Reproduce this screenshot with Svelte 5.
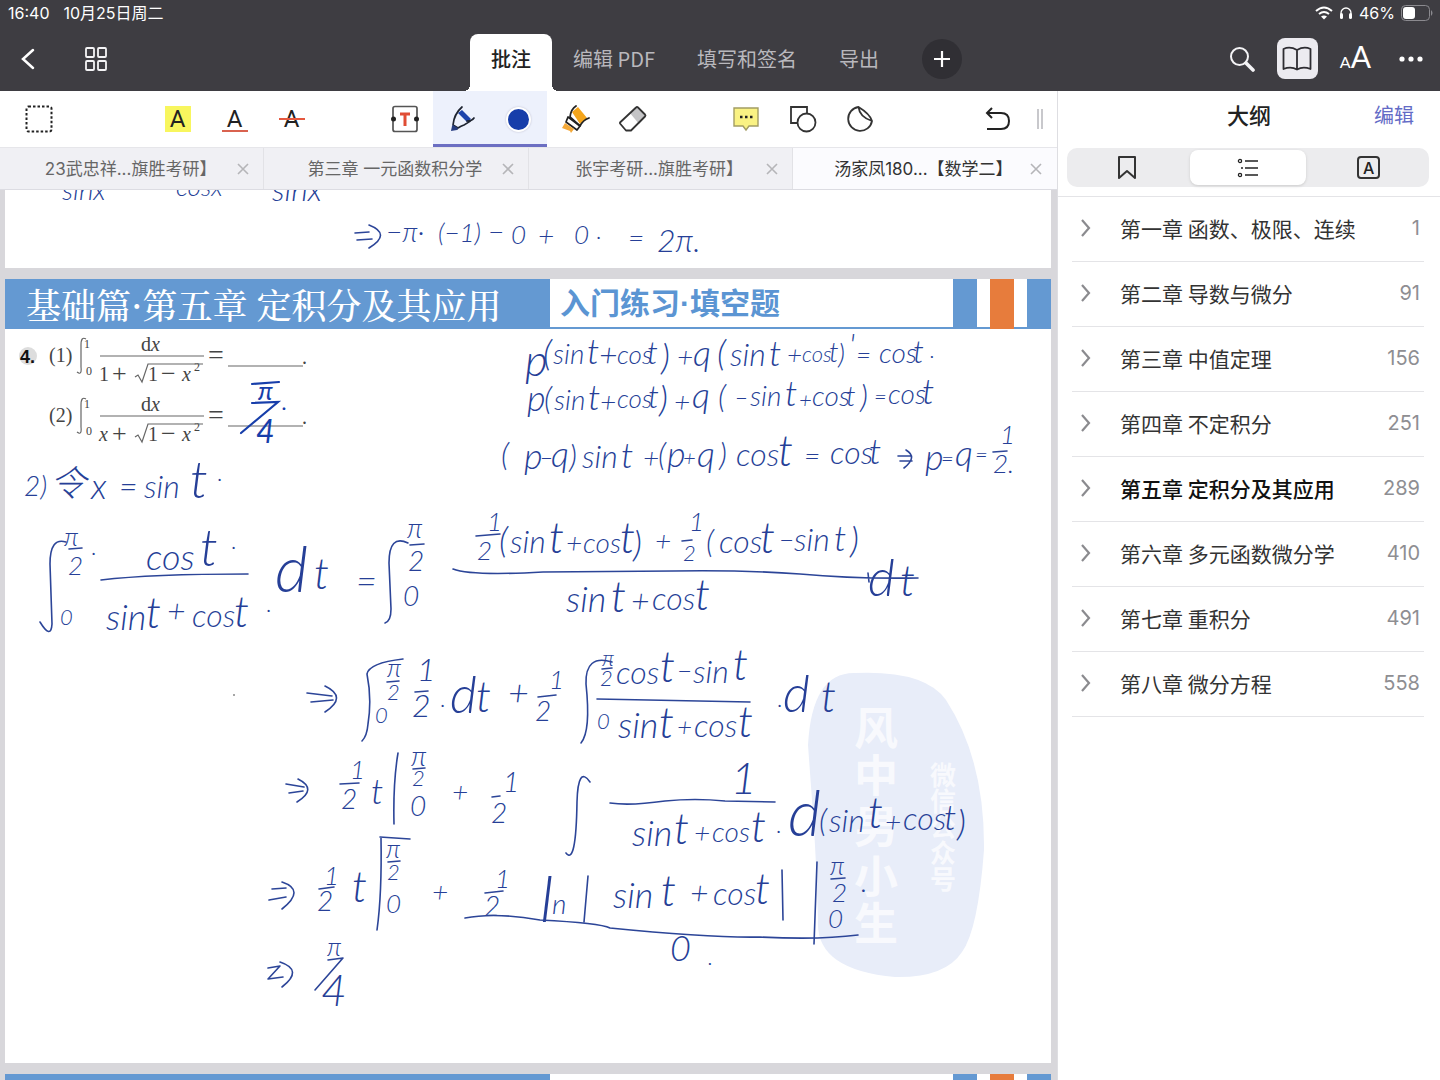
<script lang="ts">
  type Ink = [number, number, number, string];

  const modes = ['批注', '编辑 PDF', '填写和签名', '导出'];
  let mode = $state('批注');

  const tabs = ['23武忠祥...旗胜考研】', '第三章 一元函数积分学', '张宇考研...旗胜考研】', '汤家凤180...【数学二】'];
  let openTab = $state(3);

  const outline = [
    { title: '第一章 函数、极限、连续', page: 1 },
    { title: '第二章 导数与微分', page: 91 },
    { title: '第三章 中值定理', page: 156 },
    { title: '第四章 不定积分', page: 251 },
    { title: '第五章 定积分及其应用', page: 289 },
    { title: '第六章 多元函数微分学', page: 410 },
    { title: '第七章 重积分', page: 491 },
    { title: '第八章 微分方程', page: 558 },
  ];
  const currentPage = 289;

  // Handwritten notes: x, baseline, size, text
  const notesAbove: Ink[] = [
    [62, 200, 28, 'sinx'], [176, 196, 26, 'cosx'], [272, 201, 32, 'sinx'],
    [386, 242, 28, '−π·'], [438, 242, 26, '(−1)'], [488, 242, 28, '−'], [511, 244, 26, '0'],
    [538, 246, 28, '+'], [574, 244, 26, '0'], [596, 244, 22, '·'], [628, 248, 28, '='], [657, 252, 32, '2π.'],
  ];

  const notes: Ink[] = [
    [525, 376, 44, 'p'], [543, 366, 36, '('], [553, 364, 28, 'sin'], [587, 364, 36, 't'], [599, 366, 32, '+'], [617, 364, 26, 'cos'], [647, 364, 32, 't'], [661, 370, 36, ')'],
    [677, 367, 28, '+'], [693, 366, 36, 'q'], [717, 366, 36, '('], [730, 366, 32, 'sin'], [769, 366, 36, 't'], [787, 364, 26, '+'], [802, 362, 22, 'cos'], [829, 362, 28, 't'], [838, 364, 28, ')'],
    [849, 356, 32, "'"], [856, 364, 26, '='], [879, 363, 28, 'cos'], [913, 363, 32, 't'], [930, 358, 22, '.'],
    [527, 411, 36, 'p'], [544, 410, 32, '('], [554, 410, 28, 'sin'], [588, 410, 36, 't'], [600, 412, 28, '+'], [617, 408, 26, 'cos'], [648, 408, 32, 't'], [659, 412, 36, ')'],
    [674, 412, 28, '+'], [692, 408, 36, 'q'], [718, 408, 32, '('], [735, 406, 22, '−'], [750, 406, 28, 'sin'], [785, 406, 36, 't'], [799, 408, 22, '+'], [812, 406, 28, 'cos'], [846, 406, 28, 't'],
    [860, 408, 32, ')'], [874, 404, 22, '='], [888, 404, 28, 'cos'], [922, 404, 36, 't'],
    [501, 466, 32, '('], [524, 469, 36, 'p'], [540, 466, 22, '−'], [551, 467, 36, 'q'], [569, 468, 32, ')'], [582, 468, 32, 'sin'], [621, 468, 36, 't'],
    [643, 468, 28, '+'], [658, 466, 32, '('], [667, 467, 36, 'p'], [683, 466, 22, '+'], [697, 467, 36, 'q'], [719, 466, 32, ')'],
    [736, 466, 32, 'cos'], [778, 466, 44, 't'], [804, 466, 28, '='], [830, 464, 32, 'cos'], [869, 464, 36, 't'], [925, 470, 36, 'p'], [941, 466, 22, '='], [955, 466, 36, 'q'],
    [975, 462, 22, '='], [1000, 444, 26, '1'], [993, 473, 26, '2.'],

    [24, 496, 28, '2)'], [50, 496, 36, '令'], [91, 499, 36, 'x'], [119, 498, 32, '='], [144, 498, 32, 'sin'], [190, 498, 52, 't'], [217, 486, 22, '·'],

    [64, 546, 26, 'π'], [68, 575, 26, '2'], [91, 560, 22, '·'], [60, 625, 22, '0'], [146, 570, 36, 'cos'], [200, 566, 52, 't'], [231, 554, 22, '·'],
    [106, 630, 36, 'sin'], [146, 628, 44, 't'], [167, 622, 32, '+'], [192, 627, 32, 'cos'], [234, 627, 44, 't'], [266, 617, 22, '·'],
    [275, 592, 64, 'd'], [314, 589, 44, 't'], [356, 594, 36, '='],
    [407, 538, 28, 'π'], [408, 571, 28, '2'], [403, 606, 28, '0'],
    [487, 531, 26, '1'], [477, 560, 26, '2'], [499, 553, 36, '('], [510, 553, 32, 'sin'], [549, 553, 44, 't'], [566, 553, 28, '+'], [583, 553, 28, 'cos'], [620, 553, 44, 't'], [633, 557, 36, ')'],
    [655, 551, 28, '+'], [689, 531, 26, '1'], [683, 561, 22, '2'], [706, 553, 32, '('], [719, 553, 32, 'cos'], [760, 553, 44, 't'], [779, 549, 26, '−'], [794, 551, 32, 'sin'], [834, 551, 36, 't'], [850, 553, 36, ')'],
    [566, 612, 36, 'sin'], [611, 612, 44, 't'], [631, 612, 32, '+'], [652, 610, 32, 'cos'], [695, 610, 44, 't'], [868, 596, 52, 'd'], [900, 596, 44, 't'],

    [387, 677, 26, 'π'], [387, 700, 22, '2'], [375, 723, 22, '0'], [417, 681, 32, '1'], [412, 717, 32, '2'], [440, 712, 22, '·'], [450, 713, 52, 'd'], [476, 712, 44, 't'],
    [508, 706, 36, '+'], [549, 689, 26, '1'], [535, 721, 28, '2'],
    [602, 666, 22, 'π'], [600, 686, 22, '2'], [597, 729, 22, '0'], [616, 684, 32, 'cos'], [660, 682, 44, 't'], [677, 680, 26, '−'], [693, 683, 32, 'sin'], [733, 680, 44, 't'],
    [618, 738, 36, 'sin'], [659, 738, 44, 't'], [677, 736, 26, '+'], [694, 737, 32, 'cos'], [738, 737, 44, 't'], [777, 712, 22, '·'], [783, 712, 52, 'd'], [821, 712, 44, 't'],

    [350, 779, 26, '1'], [341, 809, 28, '2'], [371, 804, 36, 't'], [411, 766, 28, 'π'], [412, 786, 22, '2'], [410, 816, 28, '0'], [452, 802, 28, '+'],
    [503, 792, 28, '1'], [491, 823, 28, '2'], [731, 794, 44, '1'],
    [632, 846, 36, 'sin'], [674, 844, 44, 't'], [694, 843, 28, '+'], [712, 842, 28, 'cos'], [751, 842, 44, 't'], [776, 838, 22, '·'], [788, 836, 64, 'd'], [819, 832, 32, '('], [829, 832, 32, 'sin'], [868, 828, 44, 't'],
    [885, 832, 28, '+'], [903, 830, 32, 'cos'], [944, 830, 36, 't'], [957, 836, 36, ')'],

    [324, 885, 26, '1'], [317, 911, 28, '2'], [352, 902, 44, 't'], [386, 858, 26, 'π'], [387, 880, 22, '2'], [386, 913, 26, '0'], [432, 902, 28, '+'],
    [495, 888, 26, '1'], [484, 916, 28, '2'], [540, 922, 64, 'l'], [552, 914, 28, 'n'],
    [613, 908, 36, 'sin'], [661, 906, 44, 't'], [690, 904, 32, '+'], [713, 905, 32, 'cos'], [755, 904, 44, 't'],
    [830, 875, 26, 'π'], [832, 902, 26, '2'], [861, 892, 28, '.'], [828, 928, 26, '0'], [670, 961, 36, '0'], [708, 965, 22, '.'],
    [327, 956, 26, 'π'], [321, 1006, 44, '4'],
  ];

  // Fraction bars, integral signs, limits bars and arrows
  const strokes = [
    'M66 542q-16-5-16 22l2 60q-1 16-12-2', 'M69 549l13-1', 'M101 580q50-6 147-6',
    'M408 543q-19-9-19 20l2 46q0 12-6 14', 'M410 545l14-1',
    'M476 536l24-2M682 541l10-1', 'M453 569q18 7 90 3l130-1q75-1 127 3 54 5 118 4M868 573l1 9',
    'M403 659q-34 4-36 15 5 25 1 50-1 12-6 17M387 682l12-1M415 692l13-1M538 697l18-2',
    'M612 662q-27-8-26 22 5 47-5 59M602 669l10-1M597 699l153 3',
    'M340 784l19-1M398 753q-5 30-4 71M492 797l8-1M413 769l12-1',
    'M590 782q-12-17-13 20-1 64-11 51M610 803q20 3 55-2 30-3 60 0l50 1',
    'M319 889l15-2M381 838q1 56-4 92M380 837l30 2M388 862l12-1M485 893l18-2',
    'M588 876l-4 46M782 870l1 50M817 862l-3 82M831 879l14-1',
    'M465 918q30-6 75 2 60 3 70 8 100 10 150 9 60 3 98-2',
    'M993 452l14-1',
  ];
  const arrows = [
    'M898 456h13M900 461h12M906 450q12 7-2 18',
    'M307 693l25 3M311 702l22-2M325 686q23 11 0 26',
    'M286 784l18 3M289 793l14-2M298 779q20 10-1 23',
    'M272 889l14-1M269 900l17-3M282 882q24 8 0 27',
    'M268 968l12-2-12 13 15-2M280 962q24 8 2 25',
  ];
</script>

<svelte:head><title>汤家凤180 数学二</title></svelte:head>

<div class="app">
  <header>
    <div class="status">
      <span class="time">16:40</span><span>10月25日周二</span>
      <span class="system">
        <svg width="18" height="14" viewBox="0 0 18 14" aria-hidden="true" fill="none" stroke="#fff" stroke-width="2"><path d="M1 5q8-7 16 0M4 8q5-4 10 0"/><path d="M9 13.500l-3-3q3-2 6 0z" fill="#fff" stroke="none"/></svg>
        <svg width="14" height="14" viewBox="0 0 14 14" aria-hidden="true"><path d="M2 9V7a5 5 0 0 1 10 0v2" fill="none" stroke="#fff" stroke-width="1.300"/><rect x="1" y="7" width="3" height="6" rx="1.500" fill="#fff"/><rect x="10" y="7" width="3" height="6" rx="1.500" fill="#fff"/></svg>
        <span>46%</span>
        <svg width="33" height="16" viewBox="0 0 33 16" aria-hidden="true"><rect x=".5" y=".5" width="28" height="15" rx="4" fill="none" stroke="#8b8a8f"/><rect x="2" y="2" width="12" height="12" rx="3" fill="#fff"/><path d="M30 5q3 3 0 6z" fill="#8b8a8f"/></svg>
      </span>
    </div>
    <div class="nav">
      <div class="nav-left">
        <button aria-label="返回"><svg width="24" height="24" viewBox="0 0 24 24"><path d="M17 3L7 12l10 9" fill="none" stroke="#fff" stroke-width="2.500" stroke-linecap="round"/></svg></button>
        <button aria-label="缩略图"><svg width="24" height="24" viewBox="0 0 24 24" fill="none" stroke="#f4f4f6" stroke-width="1.800"><rect x="2" y="1" width="8" height="9" rx="1"/><rect x="14" y="1" width="8" height="9" rx="1"/><rect x="2" y="14" width="8" height="9" rx="1"/><rect x="14" y="14" width="8" height="9" rx="1"/></svg></button>
      </div>
      <nav>
        {#each modes as item}
          <button class="mode" class:active={mode === item} onclick={() => (mode = item)}>{item}</button>
        {/each}
        <button class="add" aria-label="添加"><svg width="16" height="16" viewBox="0 0 16 16"><path d="M8 0v16M0 8h16" stroke="#fff" stroke-width="2.200"/></svg></button>
      </nav>
      <div class="nav-right">
        <button aria-label="搜索"><svg width="26" height="26" viewBox="0 0 26 26" fill="none" stroke="#f4f4f6"><circle cx="10.500" cy="10.500" r="8.500" stroke-width="2"/><path d="M17 17l7 7" stroke-width="3.600" stroke-linecap="round"/></svg></button>
        <button class="book" aria-label="大纲"><svg width="30" height="26" viewBox="0 0 30 26" fill="none" stroke="#2e2d32" stroke-width="1.800" stroke-linejoin="round"><path d="M15 4Q8 0 1.500 3v20Q9 20 15 23.500 21 20 28.500 23V3Q22 0 15 4zV23"/></svg></button>
        <button class="font" aria-label="字体"><span>A</span>A</button>
        <button aria-label="更多"><svg width="24" height="6" viewBox="0 0 24 6" fill="#fff"><circle cx="3" cy="3" r="2.600"/><circle cx="12" cy="3" r="2.600"/><circle cx="21" cy="3" r="2.600"/></svg></button>
      </div>
    </div>
  </header>

  <div class="body">
    <main>
      <div class="tools">
        <div class="group">
          <button aria-label="选择"><svg width="28" height="28" viewBox="0 0 28 28"><rect x="1.500" y="1.500" width="25" height="25" rx="2" fill="none" stroke="#222" stroke-width="2" stroke-dasharray="2.500 2"/></svg></button>
        </div>
        <div class="group marks">
          <button aria-label="高亮"><span class="mark hl">A</span></button>
          <button aria-label="下划线"><span class="mark ul">A</span></button>
          <button aria-label="删除线"><span class="mark st">A</span></button>
        </div>
        <div class="group">
          <button aria-label="文本"><svg width="28" height="28" viewBox="0 0 28 28"><rect x="2" y="1.500" width="24" height="25" rx="2" fill="#fff" stroke="#555" stroke-width="1.700"/><circle cx="2.500" cy="14" r="2.500" fill="#222"/><circle cx="25.500" cy="14" r="2.500" fill="#222"/><path d="M9 9h10M14 9v12" stroke="#e04d35" stroke-width="3"/></svg></button>
          <div class="pen">
            <button aria-label="画笔"><svg width="28" height="28" viewBox="0 0 28 28" fill="none" stroke="#1e2430" stroke-width="1.700" stroke-linecap="round" stroke-linejoin="round"><path d="M10 8l4-3 9 9-4 3z" fill="#1c43ab" stroke="none"/><path d="M14 2Q6 9 5 20l5 3q3-2 6-3 6-3 10-7-2 3-7 3M5 20l4 4"/><path d="M5 20l5 3-1 2-6 1 1-5z" fill="#273d80" stroke="none"/></svg></button>
            <button aria-label="颜色"><span class="dot"></span></button>
          </div>
          <button aria-label="荧光笔"><svg width="28" height="28" viewBox="0 0 28 28" stroke-linejoin="round"><path d="M10 7l6-5 9 11-7 6z" fill="#f4a51c"/><path d="M6 12l12 9-3 4-11-8z" fill="#fff" stroke="#222" stroke-width="1.700"/><path d="M14 1Q9 4 8 12l10 9q3-6 9-8" fill="none" stroke="#222" stroke-width="1.800" stroke-linecap="round"/><path d="M3 18l9 6-3 4-1-2-8-3z" fill="#f4a939"/></svg></button>
          <button aria-label="橡皮擦"><svg width="30" height="28" viewBox="0 0 30 28" stroke-linejoin="round"><path d="M12 8l6-6 10 9-7 8z" fill="#c4c4c6"/><path d="M18 2.500q1-1 2 0l7 7q1 1 0 2L13 25.500H8l-6-7v-1z" fill="none" stroke="#333" stroke-width="1.800"/></svg></button>
        </div>
        <div class="group">
          <button aria-label="注释"><svg width="28" height="26" viewBox="0 0 28 26"><path d="M2 2h24v18H17l-3 4-3-4H2z" fill="#faf283" stroke="#a39d63" stroke-width="1.400"/><path d="M8 11h2.500M13 11h2.500M18 11h2.500" stroke="#222" stroke-width="2.500"/></svg></button>
          <button aria-label="形状"><svg width="28" height="28" viewBox="0 0 28 28" fill="none" stroke="#333" stroke-width="1.800"><path d="M9 18H2V2h16v7"/><circle cx="17.500" cy="17.500" r="9"/></svg></button>
          <button aria-label="贴纸"><svg width="28" height="28" viewBox="0 0 28 28" fill="none" stroke="#333" stroke-width="1.800" stroke-linejoin="round"><path d="M12.500 2A12 12 0 1 0 26 16Q24 9 12.500 2zM12.500 2q1 10 13.500 14"/></svg></button>
        </div>
        <div class="group end">
          <button aria-label="撤销"><svg width="26" height="24" viewBox="0 0 26 24" fill="none" stroke="#222" stroke-width="2"><path d="M7 1L2 6l5 5M2 6h14q8 0 8 8t-8 8H2"/></svg></button>
          <span class="grip"></span>
        </div>
      </div>

      <div class="tabs">
        {#each tabs as tab, i}
          <div class="tab" class:open={openTab === i}>
            <button class="name" onclick={() => (openTab = i)}>{tab}</button>
            <button class="close" aria-label="关闭"><svg width="12" height="12" viewBox="0 0 12 12"><path d="M1 1l10 10M11 1L1 11" stroke="#b5b5b8" stroke-width="1.600"/></svg></button>
          </div>
        {/each}
      </div>

      <div class="doc">
        <section class="page">
          <svg class="ink" viewBox="5 190 1046 78">
            {#each notesAbove as [x, y, size, text]}
              <text {x} {y} font-size={size}>{text}</text>
            {/each}
            <g class="stroke"><path d="M355 233l14-1M357 240l15-1M369 225q23 9 0 23M462 189h4"/></g>
          </svg>
        </section>

        <section class="page">
          <div class="band">
            <h1>基础篇·第五章 定积分及其应用</h1>
            <div class="sub"><h2>入门练习·填空题</h2><i></i><i class="orange"></i><i></i></div>
          </div>
          <svg class="ink" viewBox="5 329 1046 734">
            <path d="M808 745Q812 672 855 673 925 670 946 700 985 760 984 850 978 930 962 952 945 978 895 977 815 970 818 920 816 850 812 800z" fill="#e8edf9"/>
            <g class="seal">
              <text x="854" y="745" font-size="44">风</text><text x="854" y="792" font-size="44">中</text><text x="854" y="843" font-size="44">男</text><text x="854" y="893" font-size="44">小</text><text x="854" y="940" font-size="44">生</text>
              <text x="930" y="785" font-size="26">微</text><text x="930" y="811" font-size="26">信</text><text x="930" y="837" font-size="26">公</text><text x="930" y="863" font-size="26">众</text><text x="930" y="889" font-size="26">号</text>
            </g>

            <circle cx="28" cy="356" r="9" fill="#ddd"/>
            <text class="num" x="20" y="363" font-size="18">4.</text>
            {#each [0, 60] as dy}
              <g class="print" transform="translate(0 {dy})">
                <text x="49" y="362" font-size="20">{dy ? '(2)' : '(1)'}</text>
                <text x="84" y="348" font-size="12">1</text><text x="86" y="375" font-size="12">0</text>
                <text x="141" y="351" font-size="20">d<tspan class="var">x</tspan></text>
                <text x="99" y="381" font-size="20">{#if dy}<tspan class="var">x</tspan>{:else}1{/if}</text>
                <text x="112" y="382" font-size="26">+</text>
                <text x="148" y="381" font-size="20">1</text><text x="161" y="382" font-size="26">−</text><text class="var" x="182" y="381" font-size="20">x</text><text x="194" y="371" font-size="12">2</text>
                <text x="208" y="364" font-size="28">=</text>
                <text x="302" y="364" font-size="20">.</text>
                <path d="M86 339q-5-3-5 6v22q1 9-4 5M100 356h104M135 377l3-2 4 7 6-18h55M228 366h75"/>
              </g>
            {/each}

            {#each notes as [x, y, size, text]}
              <text {x} {y} font-size={size}>{text}</text>
            {/each}
            <g class="stroke">
              {#each strokes as d}<path {d}/>{/each}
              {#each arrows as d}<path {d}/>{/each}
              <path d="M328 960l15-2-28 32"/>
            </g>
            <g class="thick">
              <text x="258" y="400" font-size="26">π</text><text x="256" y="443" font-size="32">4</text><text x="282" y="410" font-size="22">.</text>
              <path d="M252 403l26-1-37 31M252 384l27-2"/>
            </g>
            <circle cx="234" cy="695" r="1" fill="#888"/>
          </svg>
        </section>

        <section class="page">
          <div class="band"><span class="fill"></span><div class="sub"><i></i><i class="orange"></i><i></i></div></div>
        </section>
      </div>
    </main>

    <aside>
      <div class="side-head"><span></span><h2>大纲</h2><button>编辑</button></div>
      <div class="segments">
        <button aria-label="书签"><svg width="20" height="26" viewBox="0 0 20 26" fill="none" stroke="#333" stroke-width="2" stroke-linejoin="round"><path d="M2 2h16v21l-8-7-8 7z"/></svg></button>
        <button class="chosen" aria-label="大纲列表"><svg width="22" height="20" viewBox="0 0 22 20" fill="none" stroke="#222" stroke-width="1.700"><path d="M8 3h13M8 10h13M8 17h13M4 10h2"/><circle cx="3" cy="3" r="1.600" stroke-width="1.300"/><circle cx="3" cy="17" r="1.600" stroke-width="1.300"/></svg></button>
        <button aria-label="批注列表"><span class="boxed">A</span></button>
      </div>
      <ul>
        {#each outline as item}
          <li>
            <button class:current={item.page === currentPage}>
              <svg width="10" height="18" viewBox="0 0 10 18"><path d="M1 1l7 8-7 8" fill="none" stroke="#8b8b8f" stroke-width="2.200"/></svg>
              <span class="title">{item.title}</span><span class="page-no">{item.page}</span>
            </button>
          </li>
        {/each}
      </ul>
    </aside>
  </div>
</div>

<style>
  :global(body) { margin: 0; }
  .app { height: 100vh; display: flex; flex-direction: column; overflow: hidden; background: #fff; color: #222; font-family: Inter, "Noto Sans CJK SC", sans-serif; }
  button { border: 0; padding: 0; margin: 0; background: none; font: inherit; color: inherit; cursor: pointer; display: flex; align-items: center; justify-content: center; }
  h1, h2, ul { margin: 0; padding: 0; }
  svg { display: block; flex: none; }

  header { background: #3e3d42; color: #fff; }
  .status { height: 26px; padding: 0 6px 0 8px; display: flex; align-items: center; gap: 14px; font-size: 16px; line-height: 26px; }
  .system { margin-left: auto; display: flex; align-items: center; gap: 6px; }
  .nav { height: 65px; display: grid; grid-template-columns: 1fr auto 1fr; align-items: end; }
  .nav-left, .nav-right { height: 65px; display: flex; align-items: center; }
  .nav-left { padding-left: 16px; gap: 44px; }
  .nav-right { justify-content: flex-end; padding-right: 17px; gap: 22px; }
  nav { display: flex; align-items: flex-end; padding-right: 8px; }
  .mode { height: 57px; padding: 0 21px 8px; font-size: 20px; line-height: 28px; color: #b9b8bd; font-family: "Noto Sans CJK SC", sans-serif; position: relative; }
  .mode.active { background: #fff; color: #222; font-weight: 500; border-radius: 8px 8px 0 0; }
  .mode.active::before, .mode.active::after { content: ""; position: absolute; bottom: 0; width: 6px; height: 6px; }
  .mode.active::before { right: 100%; background: radial-gradient(circle at 0 0, #3e3d42 6px, #fff 6px); }
  .mode.active::after { left: 100%; background: radial-gradient(circle at 100% 0, #3e3d42 6px, #fff 6px); }
  .add { width: 40px; height: 40px; border-radius: 50%; background: #302f34; margin: 0 0 12px 22px; }
  .book { width: 41px; height: 41px; border-radius: 8px; background: #ecebf0; }
  .font { font-family: Lato, sans-serif; font-size: 30px; line-height: 32px; align-items: baseline; }
  .font span { font-size: 16px; }
  .nav-right button:last-child { margin-left: 6px; }

  .body { flex: 1; min-height: 0; display: flex; }
  main { flex: 1; min-width: 0; display: flex; flex-direction: column; }
  .tools { height: 56px; padding: 0 14px 0 10px; display: flex; align-items: center; border-bottom: 1px solid #e6e6ea; }
  .group { display: flex; align-items: center; margin-right: 56px; }
  .group button { width: 57px; height: 56px; }
  .marks { margin-left: 26px; }
  .end { margin: 0 0 0 auto; gap: 11px; }
  .grip { width: 2px; height: 20px; border: solid #c8c8cc; border-width: 0 2px; }
  .mark { width: 26px; height: 26px; font-size: 24px; line-height: 26px; text-align: center; font-family: Roboto, sans-serif; position: relative; }
  .hl { background: #f8f65e; }
  .ul { border-bottom: 2px solid #d9624f; height: 24px; }
  .st::after { content: ""; position: absolute; left: 0; right: 0; top: 12px; height: 2px; background: #e5583f; }
  .pen { display: flex; background: #edf1fc; box-shadow: inset 0 -3px #6c6fc2; }
  .dot { width: 21px; height: 21px; border-radius: 50%; background: #173eaa; border: 2px solid #fff; box-shadow: 0 0 2px #bbc; }

  .tabs { display: grid; grid-template-columns: repeat(4, 1fr); border-bottom: 1px solid #dcdce2; background: #f0f0f4; }
  .tab { height: 41px; display: grid; grid-template-columns: 38px 1fr 40px; font-size: 17px; line-height: 24px; color: #666; border-right: 1px solid #e2e2e6; }
  .tab .name { grid-column: 2; white-space: nowrap; }
  .tab.open { background: #fbfbfe; color: #333; border-right-color: #fbfbfe; }

  .doc { flex: 1; min-height: 0; overflow: hidden; background: #d8d7db; padding: 0 6px 0 5px; display: flex; flex-direction: column; gap: 11px; }
  .page { background: #fff; flex: none; }
  .band { display: grid; grid-template-columns: 545fr 501fr; height: 50px; }
  .band h1, .fill { background: #6499d2; }
  .band h1 { color: #fff; font: 500 35px/50px "Noto Serif CJK SC", "Noto Sans CJK SC", serif; padding-left: 21px; white-space: nowrap; }
  .sub { display: flex; gap: 13px; padding-left: 10px; box-shadow: inset 0 -2px #6499d2; }
  .band h2 { font: 700 30px/50px "Liberation Sans", "Noto Sans CJK SC", sans-serif; color: #5b95d3; white-space: nowrap; }
  .sub i { width: 24px; height: 50px; background: #6499d2; }
  .sub i.orange { background: #e77c3c; }
  .sub i:nth-last-child(3) { margin-left: auto; }

  .ink { width: 100%; height: auto; overflow: hidden; fill: #263f97; font-family: Lato, "Noto Sans CJK SC", sans-serif; font-weight: 300; font-style: italic; }
  .stroke { fill: none; stroke: #2c4598; stroke-width: 1.600; stroke-linecap: round; stroke-linejoin: round; }
  .thick { fill: #173eaa; font-weight: 400; }
  .thick path { fill: none; stroke: #173eaa; stroke-width: 2.200; stroke-linecap: round; }
  .seal { fill: #fff; opacity: .7; font-family: "Noto Sans CJK SC", sans-serif; font-weight: 700; font-style: normal; }
  .num { fill: #111; font-family: "Liberation Sans", sans-serif; font-weight: 700; font-style: normal; }
  .print { fill: #444; font-family: "Liberation Serif", serif; font-weight: 400; font-style: normal; }
  .print path { fill: none; stroke: #666; stroke-width: 1.200; }
  .var { font-style: italic; }

  aside { width: 382px; border-left: 1px solid #dedee2; }
  .side-head { display: grid; grid-template-columns: 1fr auto 1fr; align-items: center; height: 50px; padding: 0 26px; margin-bottom: 7px; }
  .side-head h2 { font-size: 22px; line-height: 32px; font-weight: 500; }
  .side-head button { justify-self: end; font-size: 20px; line-height: 28px; color: #636bc6; }
  .segments { margin: 0 11px 0 9px; height: 39px; border-radius: 10px; background: #ececee; display: grid; grid-template-columns: repeat(3, 1fr); }
  .segments .chosen { background: #fff; border-radius: 8px; margin: 2px; box-shadow: 0 1px 3px #ccc; }
  .boxed { width: 19px; height: 19px; border: 2px solid #333; border-radius: 4px; font-size: 16px; line-height: 20px; font-weight: 500; text-align: center; }
  ul { list-style: none; border-top: 1px solid #e4e4e7; margin-top: 9px; }
  li { margin: 0 16px 0 14px; border-bottom: 1px solid #e4e4e7; }
  li button { width: 100%; height: 64px; padding: 0 4px 2px 9px; text-align: left; font-size: 21px; line-height: 30px; color: #333; }
  .title { flex: 1; padding-left: 29px; white-space: nowrap; font-family: "Noto Sans CJK SC", sans-serif; }
  .current .title { font-weight: 500; color: #111; }
  .page-no { font-size: 20px; color: #8e8e92; font-family: Inter, sans-serif; }
</style>
